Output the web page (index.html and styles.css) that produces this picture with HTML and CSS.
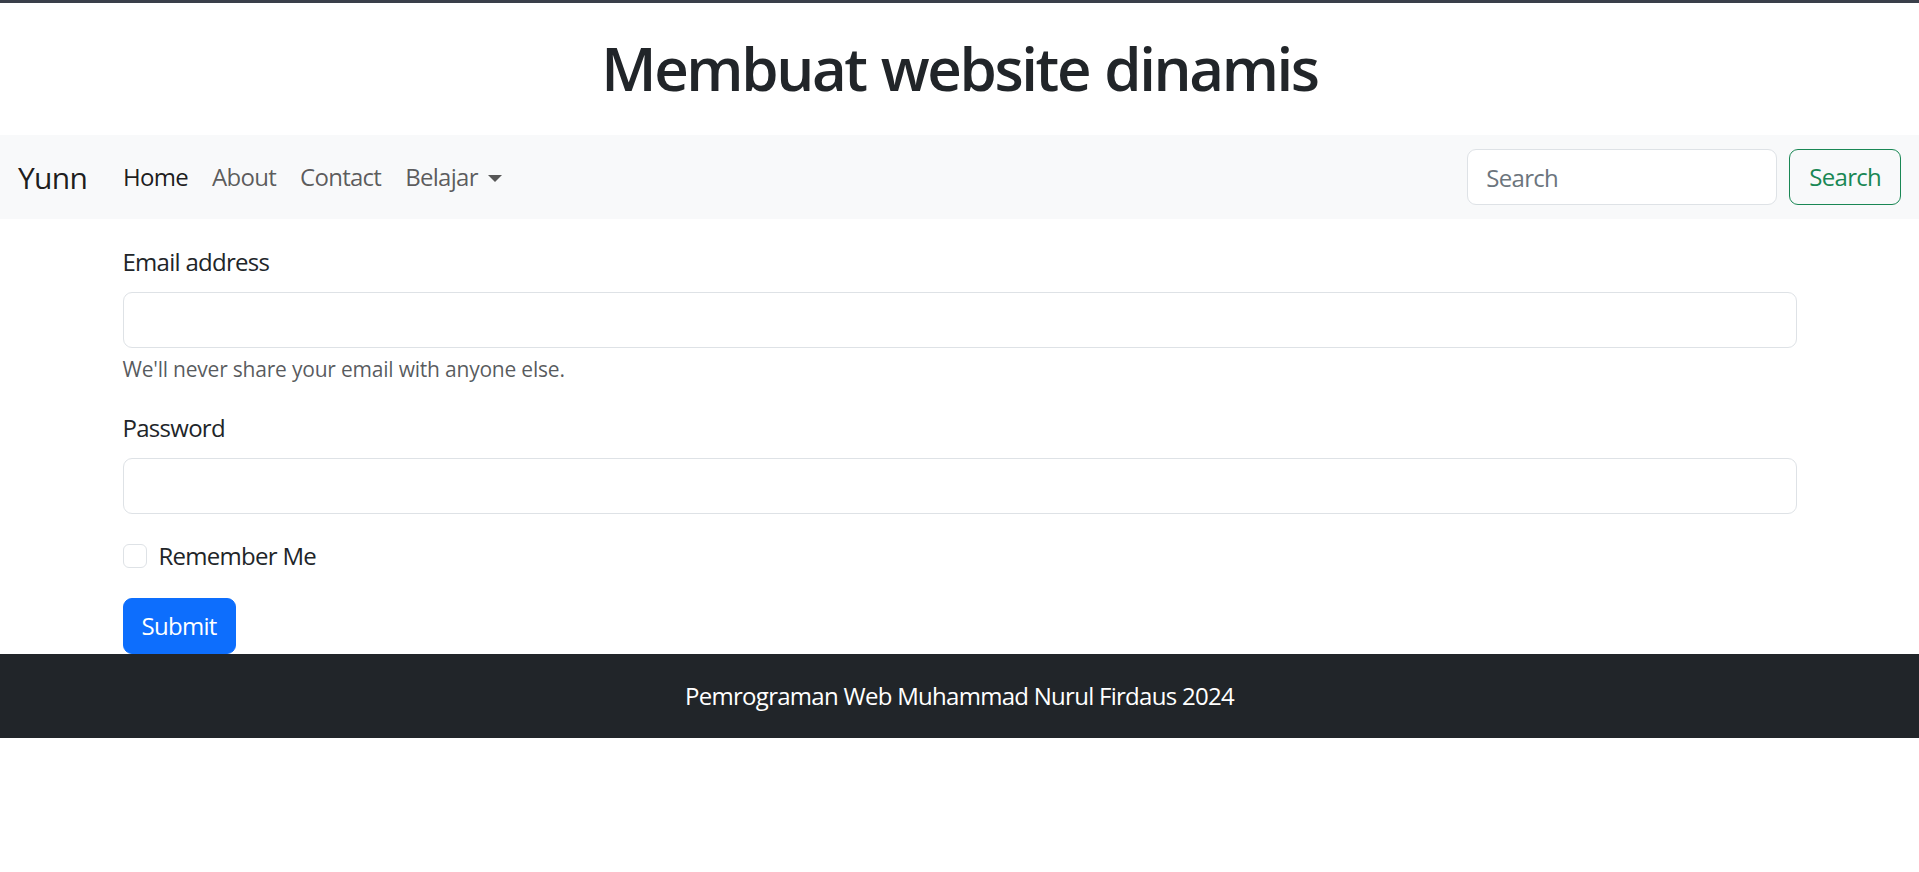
FILE: index.html
```html
<!DOCTYPE html>
<html lang="id">
<head>
<meta charset="utf-8">
<title>Membuat website dinamis</title>
<link rel="stylesheet" href="styles.css">
</head>
<body>
<div class="topline"></div>
<header class="header">
  <h1 class="title">Membuat website dinamis</h1>
</header>
<nav class="navbar">
  <div class="nav-left">
    <a class="brand" href="#">Yunn</a>
    <ul class="nav">
      <li><a class="nav-link active" href="#">Home</a></li>
      <li><a class="nav-link" href="#">About</a></li>
      <li><a class="nav-link" href="#">Contact</a></li>
      <li><a class="nav-link dropdown" href="#">Belajar</a></li>
    </ul>
  </div>
  <form class="search">
    <input class="search-input" type="search" placeholder="Search">
    <button class="btn-outline" type="button">Search</button>
  </form>
</nav>
<main class="container">
  <form class="form">
    <div class="group">
      <label class="label">Email address</label>
      <input class="control" type="email">
      <div class="form-text">We'll never share your email with anyone else.</div>
    </div>
    <div class="group">
      <label class="label">Password</label>
      <input class="control" type="password">
    </div>
    <div class="group check">
      <span class="check-box"></span>
      <label class="check-label">Remember Me</label>
    </div>
    <button class="btn-primary" type="button">Submit</button>
  </form>
</main>
<footer class="footer">Pemrograman Web Muhammad Nurul Firdaus 2024</footer>
</body>
</html>
```
FILE: styles.css
```css
* { box-sizing: border-box; }
html, body { margin: 0; padding: 0; }
body {
  font-family: "Open Sans", "Noto Sans", sans-serif;
  font-size: 24px;
  line-height: 1.5;
  letter-spacing: -0.03em;
  color: #212529;
  background: #fff;
}
.topline { height: 3px; background: #3a3f4a; }
.header {
  height: 132px;
  display: flex;
  align-items: flex-start;
  justify-content: center;
  padding-top: 29px;
}
.title {
  margin: 0;
  font-size: 60px;
  font-weight: 600;
  line-height: 1.2;
  letter-spacing: -0.04em;
  word-spacing: 2px;
}
.navbar {
  background: #f8f9fa;
  height: 84px;
  padding: 0 18px;
  display: flex;
  align-items: center;
  justify-content: space-between;
}
.nav-left { display: flex; align-items: center; }
.brand {
  font-size: 30px;
  color: rgba(0,0,0,.9);
  text-decoration: none;
  margin-right: 24px;
}
.nav { list-style: none; display: flex; margin: 0; padding: 0; }
.nav-link {
  display: block;
  padding: 12px;
  color: rgba(0,0,0,.65);
  text-decoration: none;
}
.nav-link.active { color: rgba(0,0,0,.9); }
.dropdown::after {
  content: "";
  display: inline-block;
  margin-left: 10px;
  vertical-align: 4px;
  border-top: 7px solid;
  border-left: 7px solid transparent;
  border-right: 7px solid transparent;
}
.search { display: flex; align-items: center; gap: 12px; }
.search-input {
  width: 310px;
  height: 56px;
  padding: 9px 18px;
  font: inherit;
  letter-spacing: inherit;
  color: #212529;
  border: 1px solid #dee2e6;
  border-radius: 9px;
  background: #fff;
}
.search-input::placeholder { color: #6c757d; opacity: 1; }
.btn-outline {
  height: 56px;
  padding: 9px 19px;
  font: inherit;
  letter-spacing: inherit;
  color: #198754;
  background: transparent;
  border: 1px solid #198754;
  border-radius: 9px;
}
.container {
  max-width: 1710px;
  margin: 0 auto;
  padding: 25px 18px 0;
}
.group { margin-bottom: 24px; }
.label { display: block; margin-bottom: 12px; }
.control {
  display: block;
  width: 100%;
  height: 56px;
  padding: 9px 18px;
  font: inherit;
  border: 1px solid #dee2e6;
  border-radius: 9px;
  background: #fff;
}
.form-text {
  margin-top: 6px;
  font-size: 21px;
  letter-spacing: -0.01em;
  color: rgba(33,37,41,.75);
}
.check { display: flex; align-items: center; min-height: 36px; }
.check-box {
  width: 24px;
  height: 24px;
  border: 1px solid #dee2e6;
  border-radius: 6px;
  margin-right: 12px;
}
.btn-primary {
  display: block;
  height: 56px;
  padding: 9px 18px;
  font: inherit;
  letter-spacing: inherit;
  color: #fff;
  background: #0d6efd;
  border: 1px solid #0d6efd;
  border-radius: 9px;
}
.footer {
  background: #212529;
  color: #fff;
  text-align: center;
  padding: 24px;
  line-height: 36px;
}
```
